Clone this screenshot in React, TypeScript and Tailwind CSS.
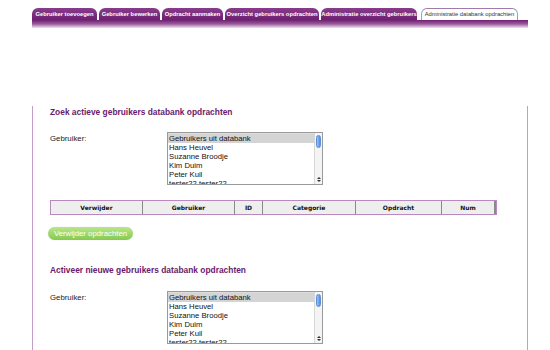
const tabs = [
  { label: "Gebruiker toevoegen", w: "w-[65px]" },
  { label: "Gebruiker bewerken", w: "w-[61px]" },
  { label: "Opdracht aanmaken", w: "w-[61px]" },
  { label: "Overzicht gebruikers opdrachten", w: "w-[94px]" },
  { label: "Administratie overzicht gebruikers", w: "w-[96px]" },
];

const users = [
  "Gebruikers uit databank",
  "Hans Heuvel",
  "Suzanne Broodje",
  "Kim Duim",
  "Peter Kuil",
  "tester22 tester22",
];

const columns = [
  { label: "Verwijder", w: "w-[92px]" },
  { label: "Gebruiker", w: "w-[92px]" },
  { label: "ID", w: "w-[28px]" },
  { label: "Categorie", w: "w-[93px]" },
  { label: "Opdracht", w: "w-[86px]" },
  { label: "Num", w: "flex-1" },
];

const UserSelect = () => {
  return (
    <div className="flex items-start">
      <div className="w-[117px] pt-[1px] text-[7.8px] text-[#222]">Gebruiker:</div>
      <div className="relative flex h-[53px] w-[156px] overflow-hidden border border-[#9a9a9a] bg-white shadow-[inset_0_1px_1px_rgba(0,0,0,0.15)]">
        <div className="flex flex-1 flex-col overflow-hidden pt-[1px]">
          {users.map((u, i) => (
            <div
              key={u}
              className={
                "h-[9px] shrink-0 pl-[1px] text-[7.7px] leading-[9px] text-[#111] " +
                (i === 0 ? "bg-[#d4d4d4]" : "")
              }
            >
              {u}
            </div>
          ))}
        </div>
        <div className="flex w-[8px] flex-col items-center border-l border-[#d8d8d8] bg-[#f4f4f4]">
          <div className="mt-[2px] h-[13px] w-[5px] rounded-full border border-[#5b8fd6] bg-gradient-to-r from-[#9cc2f2] to-[#4f8ee0]" />
          <div className="flex-1" />
          <div className="mb-[2px] flex flex-col items-center gap-[1px]">
            <div className="h-0 w-0 border-x-[2px] border-b-[2px] border-x-transparent border-b-[#333]" />
            <div className="h-0 w-0 border-x-[2px] border-t-[2px] border-x-transparent border-t-[#333]" />
          </div>
        </div>
      </div>
    </div>
  );
};

export default function App() {
  return (
    <div className="h-[350px] w-[550px] overflow-hidden bg-white font-['Liberation_Sans',Arial,sans-serif]">
      <div className="ml-[32px] w-[496px] pt-[8px]">
        {/* tabs */}
        <div className="flex h-[12px] items-end gap-[2px]">
          {tabs.map((t) => (
            <div
              key={t.label}
              className={
                t.w +
                " flex h-[12px] items-center justify-center whitespace-nowrap rounded-t-[6px] bg-gradient-to-b from-[#8a3c8c] to-[#6e1f70] text-[5.8px] font-bold text-white"
              }
            >
              {t.label}
            </div>
          ))}
          <div className="ml-[2px] flex h-[12px] w-[97px] items-center justify-center whitespace-nowrap rounded-t-[6px] border border-b-0 border-[#8aa6d8] border-t-[#a27aa8] bg-white text-[5.8px] text-[#333]">
            Administratie databank opdrachten
          </div>
        </div>
        {/* bar under tabs */}
        <div className="h-[8px] bg-gradient-to-b from-[#6e1f70] via-[#9a5a9c] to-[#f2e6f2]" />
        {/* content */}
        <div className="h-[330px] border-x border-[#c49ccc] pl-[17px] pr-[30px]">
          <h2 className="mt-[78px] text-[8.4px] font-bold leading-[12px] text-[#6a1a6c]">
            Zoek actieve gebruikers databank opdrachten
          </h2>
          <div className="mt-[14px]">
            <UserSelect />
          </div>

          <div className="mt-[15px] flex h-[15px] w-[447px] border border-[#b98ac0] bg-[#eeeeee]">
            {columns.map((c, i) => (
              <div
                key={c.label}
                className={
                  c.w +
                  " flex items-center justify-center font-['DejaVu_Sans',Verdana,sans-serif] text-[6px] font-bold text-[#111] " +
                  (i < columns.length - 1 ? "border-r border-[#8a8a8a]" : "border-r-2 border-[#8a8a8a]")
                }
              >
                {c.label}
              </div>
            ))}
          </div>

          <button className="-ml-[2px] mt-[12px] flex h-[13px] w-[85px] items-center justify-center rounded-full bg-gradient-to-b from-[#b8e68a] to-[#86c94e] text-[7.8px] text-white shadow-[0_0_1px_rgba(0,0,0,0.2)]">
            Verwijder opdrachten
          </button>

          <h2 className="mt-[24px] text-[8.4px] font-bold leading-[12px] text-[#6a1a6c]">
            Activeer nieuwe gebruikers databank opdrachten
          </h2>
          <div className="mt-[15px]">
            <UserSelect />
          </div>
        </div>
      </div>
    </div>
  );
}
